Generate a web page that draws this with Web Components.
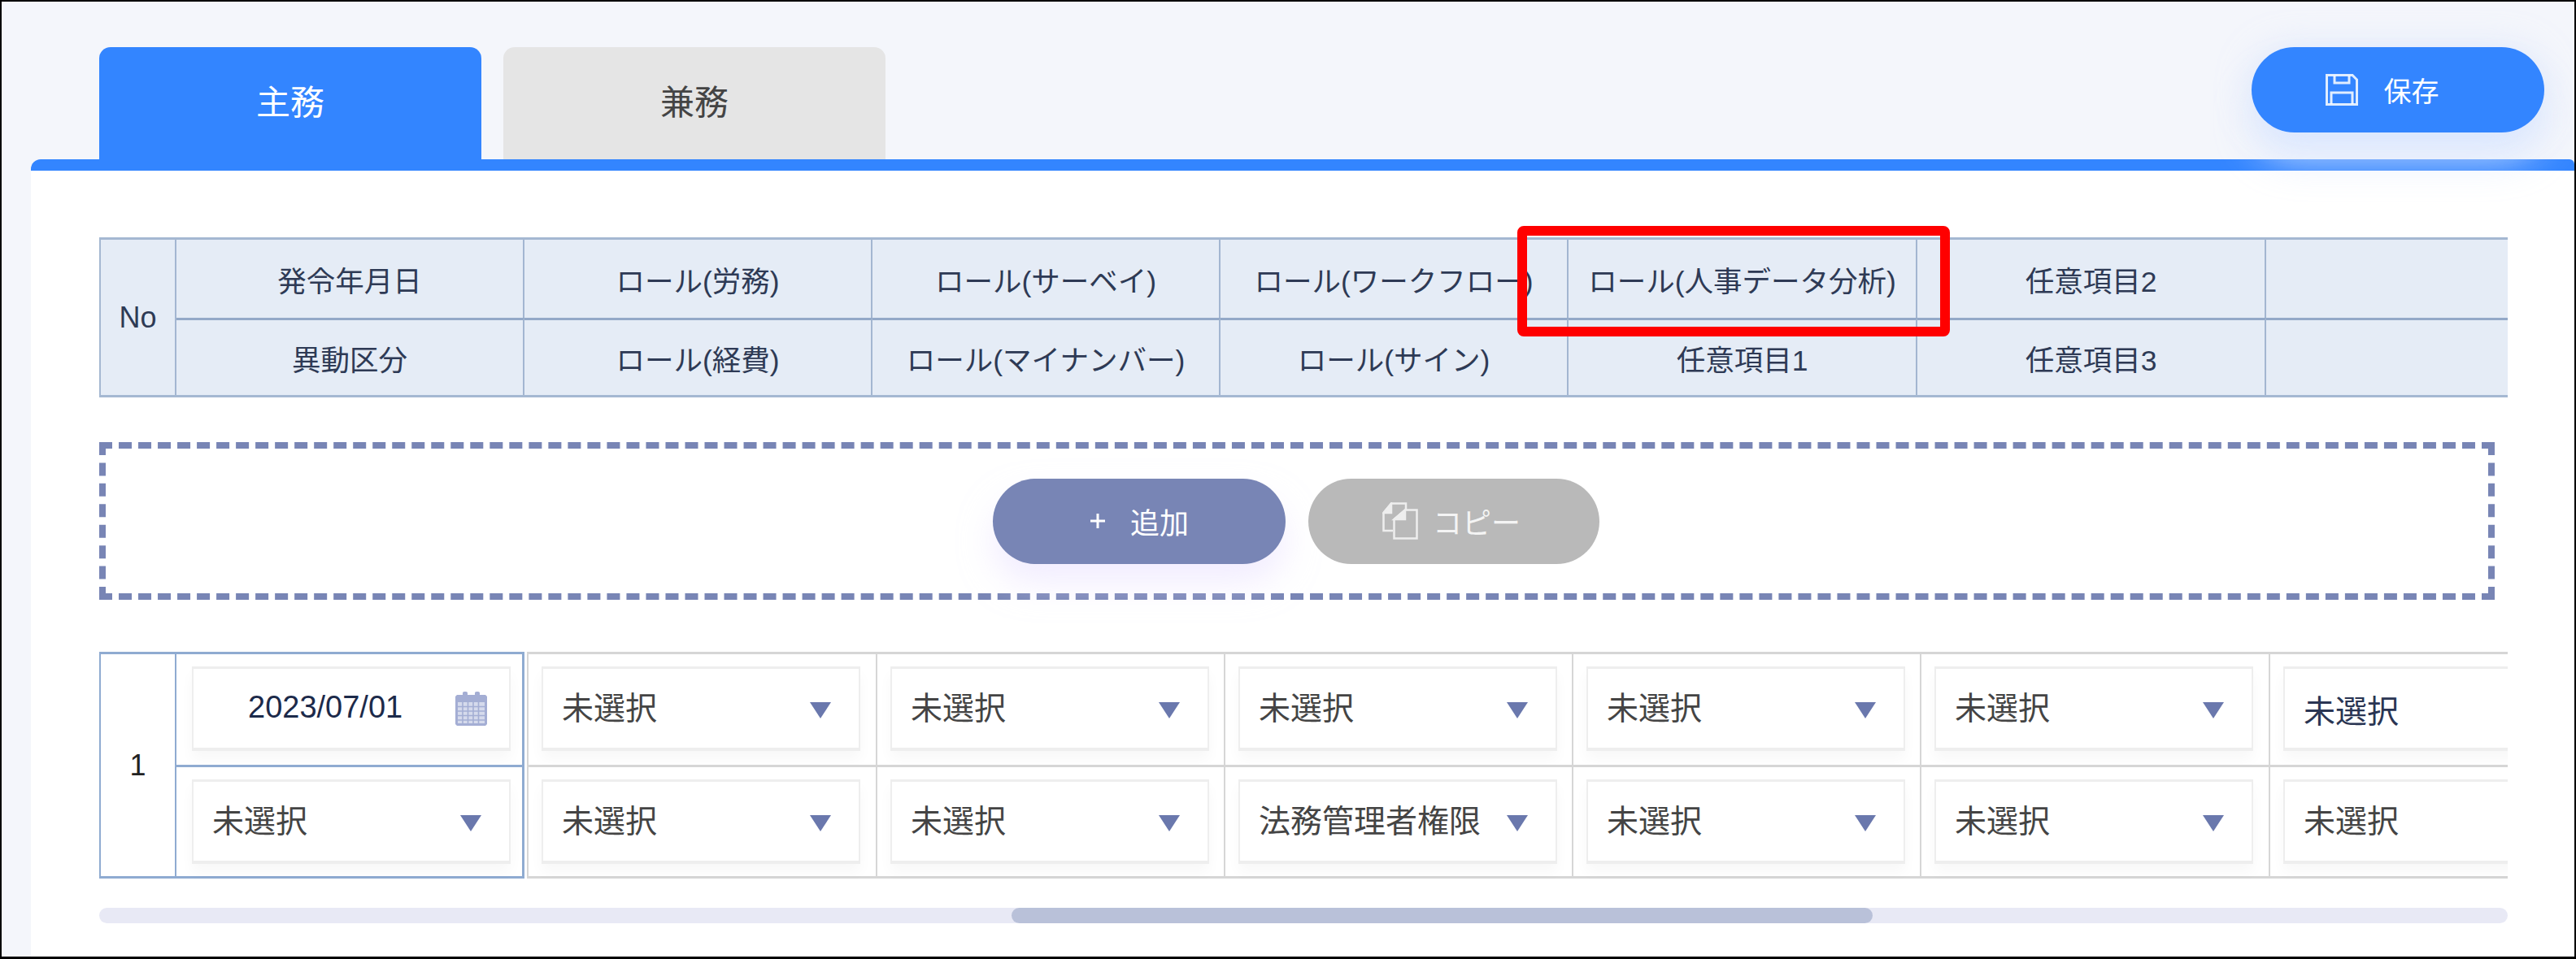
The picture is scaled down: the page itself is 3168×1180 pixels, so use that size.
<!DOCTYPE html>
<html lang="ja">
<head>
<meta charset="utf-8">
<title>主務</title>
<style>
  html, body { margin: 0; padding: 0; background: #000; }
  body { font-family: "Liberation Sans", "Noto Sans CJK JP", sans-serif; }
</style>
</head>
<body>
<hr-page>
  <tab-bar slot="tabs">
    <tab-item active>主務</tab-item>
    <tab-item>兼務</tab-item>
  </tab-bar>
  <pill-button slot="save" kind="save">保存</pill-button>

  <head-table>
    <head-cell class="no">No</head-cell>
    <head-cell>発令年月日</head-cell>
    <head-cell>ロール(労務)</head-cell>
    <head-cell>ロール(サーベイ)</head-cell>
    <head-cell>ロール(ワークフロー)</head-cell>
    <head-cell>ロール(人事データ分析)</head-cell>
    <head-cell>任意項目2</head-cell>
    <head-cell></head-cell>
    <head-cell>異動区分</head-cell>
    <head-cell>ロール(経費)</head-cell>
    <head-cell>ロール(マイナンバー)</head-cell>
    <head-cell>ロール(サイン)</head-cell>
    <head-cell>任意項目1</head-cell>
    <head-cell>任意項目3</head-cell>
    <head-cell></head-cell>
  </head-table>

  <add-zone>
    <pill-button kind="add">追加</pill-button>
    <pill-button kind="copy">コピー</pill-button>
  </add-zone>

  <row-table>
    <row-no>1</row-no>
    <row-cell blue><date-box>2023/07/01</date-box></row-cell>
    <row-cell edge><select-box>未選択</select-box></row-cell>
    <row-cell><select-box>未選択</select-box></row-cell>
    <row-cell><select-box>未選択</select-box></row-cell>
    <row-cell><select-box>未選択</select-box></row-cell>
    <row-cell><select-box>未選択</select-box></row-cell>
    <row-cell><select-box navy>未選択</select-box></row-cell>
    <row-cell blue last><select-box>未選択</select-box></row-cell>
    <row-cell edge last><select-box>未選択</select-box></row-cell>
    <row-cell last><select-box>未選択</select-box></row-cell>
    <row-cell last><select-box>法務管理者権限</select-box></row-cell>
    <row-cell last><select-box>未選択</select-box></row-cell>
    <row-cell last><select-box>未選択</select-box></row-cell>
    <row-cell last><select-box>未選択</select-box></row-cell>
  </row-table>

  <scroll-track></scroll-track>
  <red-mark slot="mark"></red-mark>
</hr-page>

<script>
// 小さいヘルパー: shadow root を開いて html を流し込むだけ
class Base extends HTMLElement {
    constructor() {
        super();
        this.attachShadow({ mode: 'open' });
        this.shadowRoot.innerHTML = this.constructor.html;
    }
}

class HrPage extends Base {
    static html = `
    <style>
        :host {
            display: flex; flex-direction: column; box-sizing: border-box;
            width: 3168px; height: 1180px; overflow: hidden; position: relative;
            border: solid #000; border-width: 2px 2px 3px 2px;
            background: #f4f6fb;
        }
        .top {
            display: flex; justify-content: space-between; align-items: flex-start;
            height: 194px; box-sizing: border-box;
            padding: 56px 37px 0 120px;
        }
        .panel {
            flex: 1; margin-left: 36px; background: #fff;
            border-top: 14px solid #3385ff; border-radius: 12px 6px 0 0;
            padding: 82px 82px 0 84px;
        }
    </style>
    <div class="top"><slot name="tabs"></slot><slot name="save"></slot></div>
    <div class="panel"><slot></slot></div>
    <slot name="mark"></slot>`;
}

class TabBar extends Base {
    static html = `
    <style>:host { display: flex; gap: 27px; }</style>
    <slot></slot>`;
}

class TabItem extends Base {
    static html = `
    <style>
        :host {
            display: flex; align-items: center; justify-content: center;
            width: 470px; height: 138px; box-sizing: border-box; padding-bottom: 10px;
            border-radius: 14px 14px 0 0;
            background: #e5e5e5; color: #444; font-size: 42px;
        }
        :host([active]) { background: #3385ff; color: #fff; }
    </style>
    <slot></slot>`;
}

const ICONS = {
    save: `<svg width="42" height="41" viewBox="0 0 42 41" fill="none" stroke="#fff" stroke-opacity=".85" stroke-width="3">
        <path d="M2.5 2.5H34L39.5 8V38.5H2.5Z"/>
        <path d="M12 3V12H30V3"/>
        <path d="M8 38V24H34V38"/>
    </svg>`,
    add: `<svg width="20" height="20" viewBox="0 0 20 20" stroke="#fff" stroke-width="3"><path d="M10 1V19M1 10H19"/></svg>`,
    copy: `<svg width="44" height="46" viewBox="0 0 44 46" fill="none" stroke="#eee" stroke-width="2.5">
        <path d="M1.5 13L11 1.5H29V10M13 35H1.5V13"/>
        <path d="M1.5 13H11V1.5Z" fill="#eee"/>
        <path d="M14.5 21L28 9.5H42.5V44.5H14.5Z"/>
        <path d="M14.5 21H28V9.5Z" fill="#eee"/>
    </svg>`
};

class PillButton extends Base {
    static html = `
    <style>
        :host {
            display: inline-flex; align-items: center; justify-content: center;
            width: 360px; height: 105px; border-radius: 53px; box-sizing: border-box;
            color: #fff; font-size: 34px; position: relative;
        }
        :host([kind="save"]) {
            background: #3385ff; gap: 31px; z-index: 1; padding-right: 40px;
            box-shadow: 0 0 40px rgba(205, 222, 255, .5), 0 34px 50px rgba(220, 232, 255, .8);
        }
        :host([kind="add"]) {
            background: #7885b5; gap: 30px; font-size: 36px;
            box-shadow: 0 24px 40px rgba(232, 222, 255, .55);
        }
        :host([kind="copy"]) {
            background: #b9b9b9; gap: 18px; color: #f4f4f4; font-size: 36px; width: 358px; padding-right: 6px;
        }
        span { display: flex; }
    </style>
    <span class="icon"></span><slot></slot>`;

    connectedCallback() {
        this.shadowRoot.querySelector('.icon').innerHTML = ICONS[this.getAttribute('kind')] || '';
    }
}

class HeadTable extends Base {
    static html = `
    <style>
        :host {
            display: grid; box-sizing: border-box; width: 2962px; height: 197px;
            grid-template-columns: 93px 428px 428px 428px 428px 429px 429px 428px;
            grid-template-rows: 96px 95px;
            overflow: hidden; background: #e5ecf6; color: #2e3a55;
            border-top: 3px solid #a5b8d2; border-bottom: 3px solid #a5b8d2; border-left: 2px solid #a5b8d2;
        }
    </style>
    <slot></slot>`;
}

class HeadCell extends Base {
    static html = `
    <style>
        :host {
            display: flex; align-items: center; justify-content: center; box-sizing: border-box;
            font-size: 35.5px; white-space: nowrap;
            border-right: 2px solid #a3b6d1;
        }
        :host(:nth-child(n+9)) { border-top: 3px solid #93a9c8; }
        :host(.no) { grid-row: span 2; border-top: 0; font-size: 36px; }
    </style>
    <slot></slot>`;
}

class AddZone extends Base {
    static html = `
    <style>
        :host {
            display: flex; align-items: center; justify-content: center; gap: 28px;
            box-sizing: border-box; width: 2946px; height: 194px; padding-right: 2px;
            margin-top: 55px; border: 8px dashed #7885b5;
        }
    </style>
    <slot></slot>`;
}

class RowTable extends Base {
    static html = `
    <style>
        :host {
            display: grid; box-sizing: border-box; width: 2962px; height: 279px; margin-top: 64px;
            grid-template-columns: 93px 430px 434px 428px 428px 428px 429px 428px;
            grid-template-rows: 139px 140px;
            overflow: hidden; background: #fff;
        }
    </style>
    <slot></slot>`;
}

class RowNo extends Base {
    static html = `
    <style>
        :host {
            grid-row: span 2; display: flex; align-items: center; justify-content: center;
            box-sizing: border-box; font-size: 36px; color: #222;
            border: solid #8fabd1; border-width: 3px 2px 3px 2px; border-right-width: 0;
        }
    </style>
    <slot></slot>`;
}

class RowCell extends Base {
    static html = `
    <style>
        :host {
            display: block; box-sizing: border-box; padding: 15px 0 0 16px;
            border-top: 3px solid #d6d6d6; border-right: 2px solid #d6d6d6;
        }
        :host([last]) { border-bottom: 3px solid #d6d6d6; }
        :host([blue]) {
            padding-left: 19px; border-color: #8fabd1; border-left: 2px solid #8fabd1;
            border-right-width: 3px;
        }
        :host([edge]) { margin-left: 3px; border-left: 2px solid #d6d6d6; }
    </style>
    <slot></slot>`;
}

class SelectBox extends Base {
    static html = `
    <style>
        :host {
            display: flex; align-items: center; justify-content: space-between; box-sizing: border-box;
            width: 392px; height: 104px; padding: 0 34px 8px 23px;
            background: #fff; color: #444; font-size: 39px; white-space: nowrap;
            border: solid #eee; border-width: 3px 2px 4px;
            box-shadow: 0 10px 16px rgba(0, 0, 0, .03);
        }
        :host([navy]) { color: #2a3553; padding-bottom: 0; }
        i { width: 0; height: 0; margin-top: 13px; flex: none;
            border: solid transparent; border-width: 20px 13px 0; border-top-color: #6a78ad; }
    </style>
    <slot></slot><i></i>`;
}

class DateBox extends Base {
    static html = `
    <style>
        :host {
            display: flex; align-items: center; justify-content: space-between; box-sizing: border-box;
            width: 392px; height: 104px; padding: 0 27px 2px 67px;
            background: #fff; color: #1c2a4a; font-size: 38px; white-space: nowrap;
            border: solid #eee; border-width: 3px 2px 4px;
            box-shadow: 0 10px 16px rgba(0, 0, 0, .03);
        }
        svg { flex: none; margin-top: 3px; }
    </style>
    <slot></slot>
    <svg width="39" height="42" viewBox="0 0 39 42">
        <path d="M2 4H9V1.5Q9 0 11 0H13Q15 0 15 1.5V4H24V1.5Q24 0 26 0H28Q30 0 30 1.5V4H37L39 6V40L37 42H2L0 40V6Z" fill="#a4aed4"/>
        <rect x="3" y="13" width="33" height="26" fill="#d5daec"/>
        <path d="M3 18.5H36M3 24H36M3 29.5H36M3 35H36M9 13V39M15.5 13V39M22 13V39M28.5 13V39" stroke="#a4aed4" stroke-width="1.6"/>
    </svg>`;
}

class ScrollTrack extends Base {
    static html = `
    <style>
        :host {
            display: block; width: 2962px; height: 19px; margin-top: 36px; position: relative;
            background: #e8e9f5; border-radius: 10px; overflow: hidden;
        }
        div { margin-left: 1122px; width: 1059px; height: 100%; background: #b9c1d9; border-radius: 10px; }
    </style>
    <div></div>`;
}

// 赤枠はスクショ上の注釈なので absolute のまま
class RedMark extends Base {
    static html = `
    <style>
        :host {
            position: absolute; left: 1864px; top: 276px; width: 532px; height: 136px;
            box-sizing: border-box; border: 12px solid #f00; border-radius: 8px;
        }
    </style>`;
}

customElements.define('hr-page', HrPage);
customElements.define('tab-bar', TabBar);
customElements.define('tab-item', TabItem);
customElements.define('pill-button', PillButton);
customElements.define('head-table', HeadTable);
customElements.define('head-cell', HeadCell);
customElements.define('add-zone', AddZone);
customElements.define('row-table', RowTable);
customElements.define('row-no', RowNo);
customElements.define('row-cell', RowCell);
customElements.define('select-box', SelectBox);
customElements.define('date-box', DateBox);
customElements.define('scroll-track', ScrollTrack);
customElements.define('red-mark', RedMark);
</script>
</body>
</html>
